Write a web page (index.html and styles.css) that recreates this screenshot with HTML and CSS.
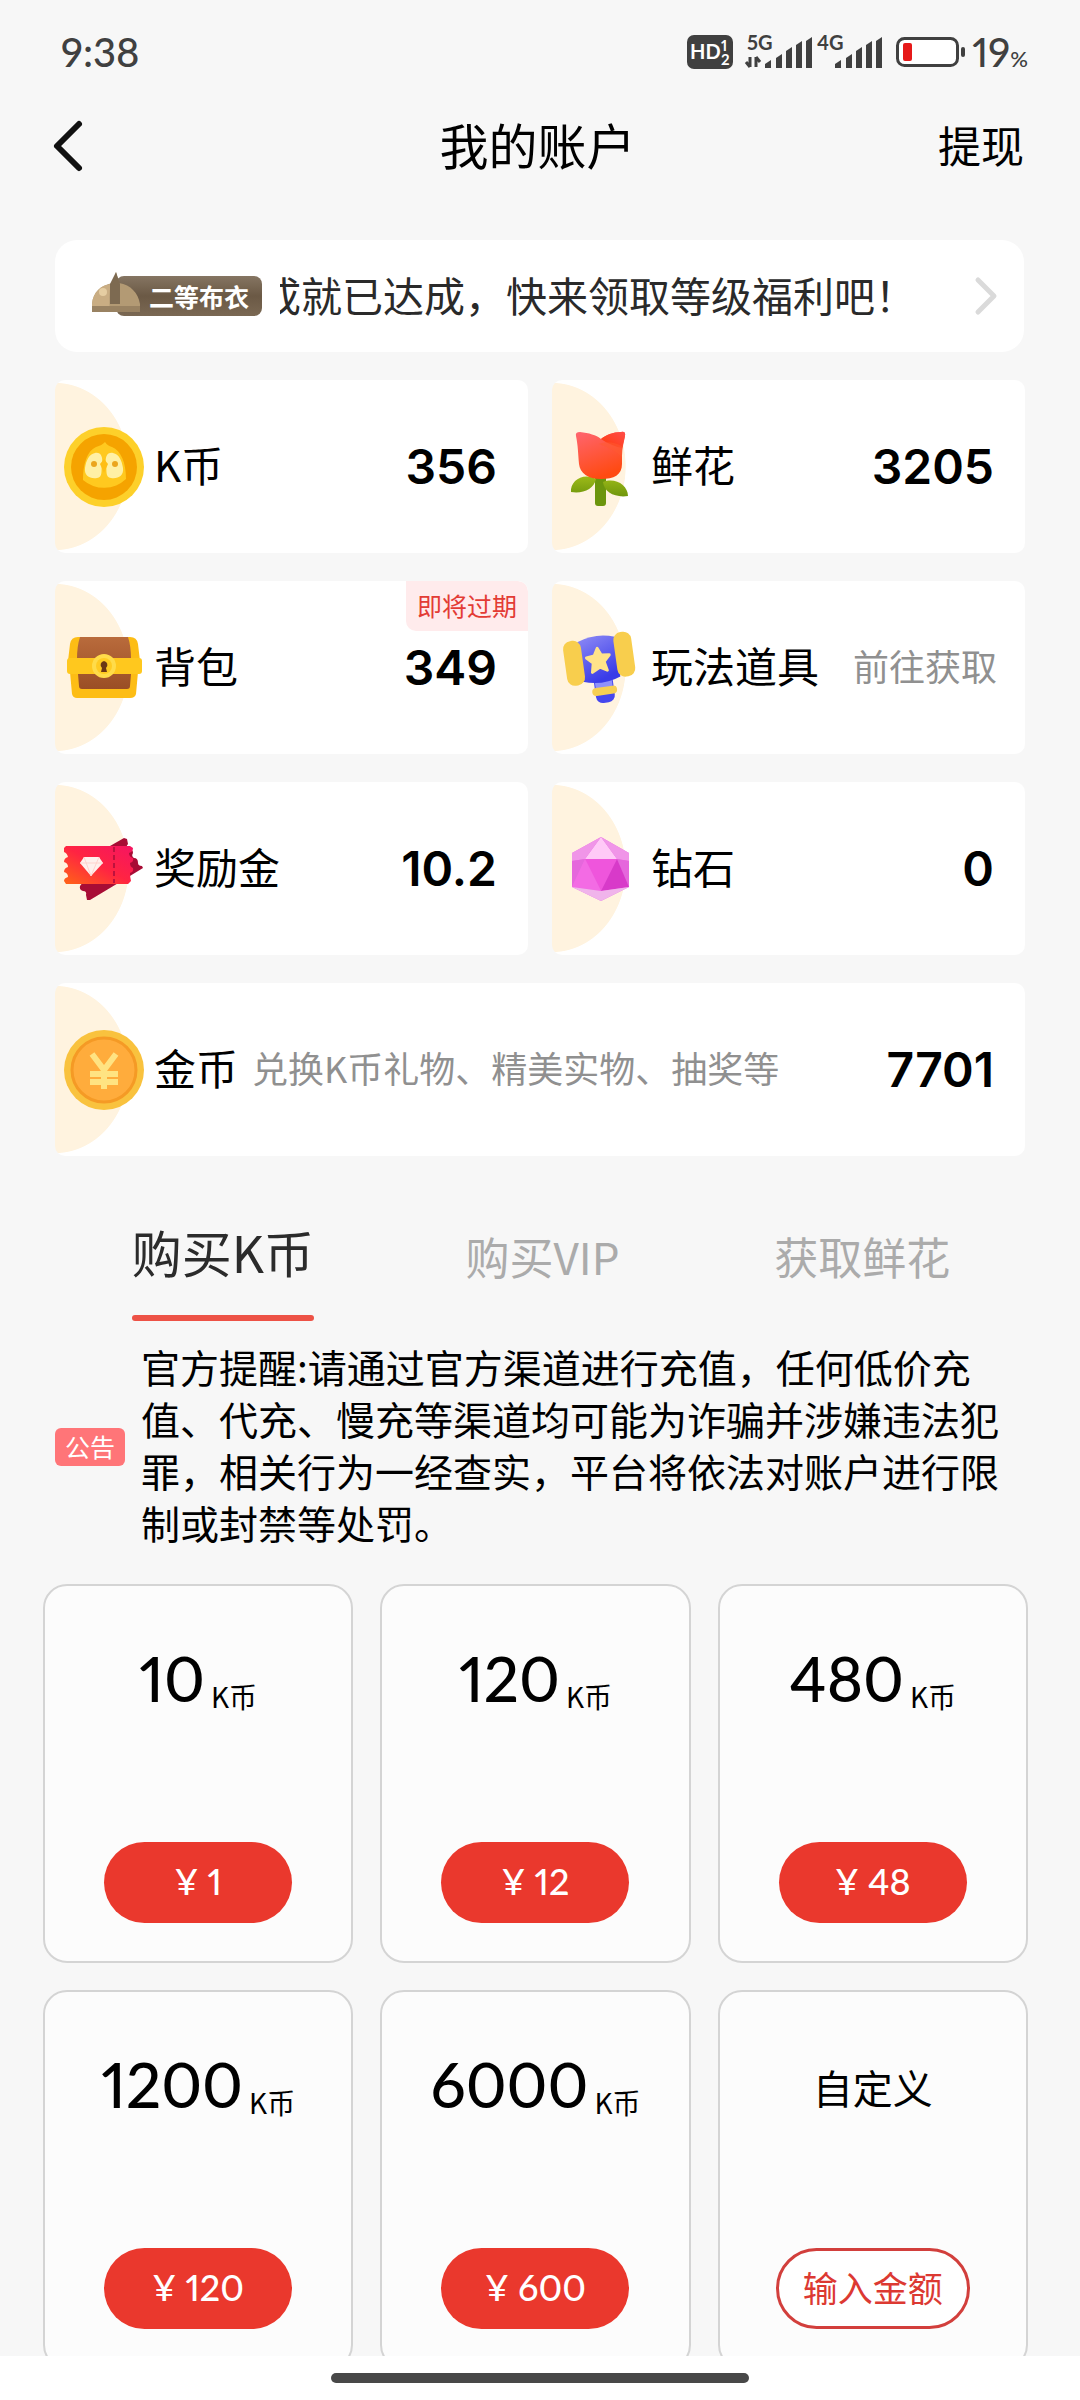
FILE: index.html
```html
<!DOCTYPE html>
<html lang="zh-CN">
<head>
    <meta charset="UTF-8">
    <meta name="viewport" content="width=device-width, initial-scale=1.0">
    <title>我的账户</title>
    <link rel="stylesheet" href="styles.css">
</head>
<body>
    <div class="app">
        <div class="status-bar">
            <span class="status-time">9:38</span>
            <div class="status-icons">
                <svg class="hd-icon" width="46" height="34" viewBox="0 0 46 34">
                    <rect width="46" height="34" rx="7" fill="#404040"/>
                    <text x="3" y="24" font-size="20" font-weight="700" fill="#fff">HD</text>
                    <text x="34" y="16" font-size="15" font-weight="700" fill="#fff">1</text>
                    <text x="34" y="30" font-size="15" font-weight="700" fill="#fff">2</text>
                </svg>
                <svg class="signal-5g" width="67" height="34" viewBox="0 0 67 34">
                    <text x="2" y="15" font-size="20" font-weight="700" fill="#404040">5G</text>
                    <path d="M5 22v10M5 32l-4-5M11 32V22M11 22l4 5" stroke="#404040" stroke-width="3" fill="none"/>
                    <path d="M20 29l6-4v8h-6zM31 23l6-4v14h-6zM41 16l6-4v21h-6zM51 10l6-4v27h-6zM61 6l6-4v31h-6z" fill="#404040"/>
                </svg>
                <svg class="signal-4g" width="65" height="34" viewBox="0 0 65 34">
                    <text x="0" y="15" font-size="20" font-weight="700" fill="#404040">4G</text>
                    <path d="M18 29l6-4v8h-6zM29 23l6-4v14h-6zM39 16l6-4v21h-6zM49 10l6-4v27h-6zM59 6l6-4v31h-6z" fill="#404040"/>
                </svg>
                <svg class="battery-icon" width="70" height="30" viewBox="0 0 70 30">
                    <rect x="1.5" y="1.5" width="60" height="27" rx="7" fill="#fff" stroke="#404040" stroke-width="3"/>
                    <rect x="7" y="6" width="9" height="18" rx="2" fill="#e61919"/>
                    <rect x="65" y="10" width="4" height="10" rx="2" fill="#404040"/>
                </svg>
                <span class="battery-level">19<small>%</small></span>
            </div>
        </div>

        <header class="header">
            <button class="back-button" aria-label="返回">
                <svg width="32" height="52" viewBox="0 0 32 52">
                    <path d="M28 4L6 26l22 22" fill="none" stroke="#111" stroke-width="6" stroke-linecap="round" stroke-linejoin="round"/>
                </svg>
            </button>
            <h1>我的账户</h1>
            <a class="withdraw" href="#">提现</a>
        </header>

        <main class="content">
            <a class="banner" href="#">
                <span class="level-badge">
                    <svg width="50" height="42" viewBox="0 0 50 42">
                        <path d="M0 39V32C1 20 9 13 21 11l3-11 3 11c12 2 19 10 21 21v7z" fill="#b39a74"/>
                        <path d="M0 39V32C1 20 9 13 19 12c-2 8-2 18-1 27z" fill="#c9ad83"/>
                        <path d="M24 0l4 12v20H18V12z" fill="#7d6a51"/>
                        <circle cx="11" cy="20" r="4" fill="#e5cda2"/>
                        <path d="M0 34h48v6H0z" fill="#998262"/>
                    </svg>
                    <span>二等布衣</span>
                </span>
                <span class="banner-text">成就已达成，快来领取等级福利吧！</span>
                <svg width="24" height="40" viewBox="0 0 24 40">
                    <path d="M4 4l16 16L4 36" fill="none" stroke="#dadada" stroke-width="5" stroke-linecap="round" stroke-linejoin="round"/>
                </svg>
            </a>

            <section class="wallet">
                <a class="wallet-card" href="#">
                    <svg class="wallet-icon" viewBox="0 0 80 80">
                        <circle cx="40" cy="40" r="40" fill="#fdd02a"/>
                        <circle cx="40" cy="40" r="33" fill="#f5a300"/>
                        <path d="M41 15c2 3 4 4 7 5 9 4 14 15 14 32a32 32 0 0 1-43 1c0-16 4-29 13-33 4-1 7-3 9-5z" fill="#ffc91f"/>
                        <path d="M31 26c6-1 8 4 7 11s1 13-5 14c-7 1-13-2-12-10 1-7 4-14 10-15zM49 26c-6-1-8 4-7 11s-1 13 5 14c7 1 13-2 12-10-1-7-4-14-10-15z" fill="#fff0a5"/>
                        <circle cx="30" cy="37" r="3" fill="#eba51e"/>
                        <circle cx="51" cy="37" r="3" fill="#eba51e"/>
                        <path d="M40 32l4 5-4 9-4-9z" fill="#ffbe14"/>
                    </svg>
                    <span class="wallet-name">K币</span>
                    <strong class="wallet-value">356</strong>
                </a>
                <a class="wallet-card" href="#">
                    <svg class="wallet-icon" viewBox="0 0 80 80">
                        <defs>
                            <linearGradient id="petal" x1="0" y1="0" x2="0.4" y2="1">
                                <stop offset="0" stop-color="#ff6570"/>
                                <stop offset="1" stop-color="#ff4a12"/>
                            </linearGradient>
                            <linearGradient id="petal-back" x1="1" y1="0" x2="0" y2="1">
                                <stop offset="0" stop-color="#ff4d4a"/>
                                <stop offset="1" stop-color="#ff3a08"/>
                            </linearGradient>
                            <linearGradient id="leaf" x1="0" y1="0" x2="0" y2="1">
                                <stop offset="0" stop-color="#9dba18"/>
                                <stop offset="1" stop-color="#6f960c"/>
                            </linearGradient>
                        </defs>
                        <path d="M34 50h11v26q0 3-3 3h-5q-3 0-3-3z" fill="#6c950d"/>
                        <path d="M10 65c-1-11 12-20 25-13-2 10-13 15-25 13zM67 69c0-11-13-19-25-14 1 10 12 16 25 14z" fill="url(#leaf)"/>
                        <path d="M15 9q-1-4 4-4c9 1 16 3 21 7 5-4 12-7 20-7q5-1 4 4c-1 6-3 12-3 20v8c0 11-8 15-21 15S19 46 18 37c-1-12-1-18-3-28z" fill="url(#petal)"/>
                        <path d="M40 12c5-4 12-7 20-7q5-1 4 4c-1 4-2 8-3 12-5-1-14-4-21-9z" fill="url(#petal-back)"/>
                        <path d="M38 17c7-3 15-2 23 2v11c-7-6-14-10-23-13z" fill="#ff5a30" opacity="0.5"/>
                    </svg>
                    <span class="wallet-name">鲜花</span>
                    <strong class="wallet-value">3205</strong>
                </a>
                <a class="wallet-card" href="#">
                    <svg class="wallet-icon" viewBox="0 0 80 80">
                        <defs>
                            <linearGradient id="wood" x1="0" y1="0" x2="0" y2="1">
                                <stop offset="0" stop-color="#b96b3c"/>
                                <stop offset="1" stop-color="#9a4e25"/>
                            </linearGradient>
                        </defs>
                        <path d="M6 16q1-7 8-7h52q7 0 8 7l2 17H4zM6 44h68l-2 22q-1 4-6 4H13q-4 0-5-4z" fill="#fdbd15"/>
                        <path d="M16 9h48q3 9 3 22H13q0-13 3-22zM14 46h53l-1 12q0 3-3 3H18q-3 0-3-3z" fill="url(#wood)"/>
                        <rect x="3" y="30" width="75" height="16" rx="3" fill="#ffc81e"/>
                        <circle cx="40" cy="38" r="12" fill="#ffdc4a"/>
                        <circle cx="40" cy="38" r="8" fill="#ffcb22"/>
                        <path d="M40 33a4 4 0 0 1 2 7l1 4h-6l1-4a4 4 0 0 1 2-7z" fill="#6b3715"/>
                    </svg>
                    <span class="wallet-name">背包</span>
                    <strong class="wallet-value">349</strong>
                    <span class="expire-tag">即将过期</span>
                </a>
                <a class="wallet-card" href="#">
                    <svg class="wallet-icon" viewBox="0 0 80 80">
                        <defs>
                            <linearGradient id="hammer" x1="0" y1="0" x2="0.3" y2="1">
                                <stop offset="0" stop-color="#8b88f5"/>
                                <stop offset="1" stop-color="#3a3ce8"/>
                            </linearGradient>
                        </defs>
                        <g transform="translate(0 -3) rotate(-8 40 36)">
                            <rect x="30" y="50" width="19" height="28" rx="7" fill="#4547ee"/>
                            <rect x="31" y="48" width="17" height="15" fill="#8f91fa"/>
                            <rect x="27" y="62" width="25" height="8" rx="4" fill="#f6cf52"/>
                            <path d="M19 14q20-7 38 0v40q-18 7-38 0z" fill="url(#hammer)"/>
                            <rect x="4" y="12" width="18" height="45" rx="8" fill="#f8ce4d"/>
                            <rect x="55" y="10" width="18" height="45" rx="8" fill="#f8ce4d"/>
                            <path d="M38 23l3 7 8 1-6 6 2 9-7-4-8 4 2-9-6-6 8-1z" fill="#ffe38a" stroke="#ffe38a" stroke-width="3" stroke-linejoin="round"/>
                        </g>
                    </svg>
                    <span class="wallet-name">玩法道具</span>
                    <span class="wallet-hint wallet-link">前往获取</span>
                </a>
                <a class="wallet-card" href="#">
                    <svg class="wallet-icon" viewBox="0 0 80 80">
                        <defs>
                            <linearGradient id="ticket" x1="0" y1="1" x2="1" y2="0">
                                <stop offset="0" stop-color="#ff6417"/>
                                <stop offset="0.5" stop-color="#ff2442"/>
                                <stop offset="1" stop-color="#f51462"/>
                            </linearGradient>
                        </defs>
                        <path d="M46 17l14-8 3 1 1 5q-3 3 1 5 4 0 4 4-2 3 1 5 4 0 4 5 0 3 4 3l1 2-18 11-35 21-3 0-1-5q1-4-3-4-4-1-3-5z" fill="#a80c35"/>
                        <path d="M0 19l2-2h64l3 2q0 4-4 5 0 4 4 5 1 4-3 5 0 4 3 5 1 4-3 5 0 4 1 8l-3 3H2l-2-3q0-3 4-4 0-4-4-5 0-4 4-5 0-4-4-5 0-4 4-5-1-4-4-5z" fill="url(#ticket)"/>
                        <path d="M50 18v36" stroke="#bd123e" stroke-width="2" stroke-dasharray="5 3"/>
                        <path d="M20 28h15l4 6-12 13-11-13z" fill="#fff0ed"/>
                        <path d="M16 34h23M20 28l7 19 8-19" fill="none" stroke="#ffd3ce"/>
                    </svg>
                    <span class="wallet-name">奖励金</span>
                    <strong class="wallet-value">10.2</strong>
                </a>
                <a class="wallet-card" href="#">
                    <svg class="wallet-icon" viewBox="0 0 80 80">
                        <path d="M40 8l28 16v34L40 72 11 58V24z" fill="#e96ee0"/>
                        <path d="M40 8L24 30h32z" fill="#ffc9f7"/>
                        <path d="M40 8L11 24v8l13-2zM40 8l28 16v8l-12-2z" fill="#f095e8"/>
                        <path d="M24 30h32L40 62z" fill="#ef55dc"/>
                        <path d="M24 30l-13 2v26zM56 30l12 2v26z" fill="#e567dc"/>
                        <path d="M24 30L11 58l29 4z" fill="#f36be4"/>
                        <path d="M56 30L40 62l28-4z" fill="#d83ac9"/>
                        <path d="M11 58l29 4 28-4-28 14z" fill="#f0b4eb"/>
                    </svg>
                    <span class="wallet-name">钻石</span>
                    <strong class="wallet-value">0</strong>
                </a>
                <a class="wallet-card wallet-wide" href="#">
                    <svg class="wallet-icon" viewBox="0 0 80 80">
                        <circle cx="40" cy="40" r="40" fill="#f9c23e"/>
                        <circle cx="40" cy="40" r="32" fill="#ffac3c" stroke="#f59a25" stroke-width="3"/>
                        <path d="M28 24l12 16 12-16M26 44h28M26 52h28M40 40v19" fill="none" stroke="#ffe382" stroke-width="6"/>
                    </svg>
                    <span class="wallet-name">金币</span>
                    <span class="wallet-hint">兑换K币礼物、精美实物、抽奖等</span>
                    <strong class="wallet-value">7701</strong>
                </a>
            </section>

            <nav class="tabs">
                <a class="tab active" href="#">购买K币</a>
                <a class="tab" href="#">购买VIP</a>
                <a class="tab" href="#">获取鲜花</a>
            </nav>

            <div class="notice">
                <span class="notice-tag">公告</span>
                <p>官方提醒:请通过官方渠道进行充值，任何低价充值、代充、慢充等渠道均可能为诈骗并涉嫌违法犯罪，相关行为一经查实，平台将依法对账户进行限制或封禁等处罚。</p>
            </div>

            <section class="packages">
                <div class="package">
                    <p class="amount">10<small>K币</small></p>
                    <button class="price">¥ 1</button>
                </div>
                <div class="package">
                    <p class="amount">120<small>K币</small></p>
                    <button class="price">¥ 12</button>
                </div>
                <div class="package">
                    <p class="amount">480<small>K币</small></p>
                    <button class="price">¥ 48</button>
                </div>
                <div class="package">
                    <p class="amount">1200<small>K币</small></p>
                    <button class="price">¥ 120</button>
                </div>
                <div class="package">
                    <p class="amount">6000<small>K币</small></p>
                    <button class="price">¥ 600</button>
                </div>
                <div class="package">
                    <p class="amount custom">自定义</p>
                    <button class="price price-outline">输入金额</button>
                </div>
            </section>
        </main>

        <div class="home-bar"><span></span></div>
    </div>
</body>
</html>
```
FILE: styles.css
```css
* {
    box-sizing: border-box;
}

body {
    margin: 0;
    background: #f7f7f7;
    color: #000;
    font-family: 'Noto Sans CJK SC', sans-serif;
}

h1,
p {
    margin: 0;
    font-weight: 400;
}

a {
    color: inherit;
    text-decoration: none;
}

button {
    padding: 0;
    border: none;
    background: none;
    font-family: inherit;
    cursor: pointer;
}

svg {
    display: block;
    flex: none;
    overflow: visible;
}

.app {
    display: flex;
    flex-direction: column;
    height: 100vh;
    overflow: hidden;
}

/* status bar */
.status-bar {
    display: flex;
    flex: none;
    justify-content: space-between;
    align-items: center;
    height: 104px;
    padding: 0 52px 0 61px;
    color: #404040;
    font-family: Lato, sans-serif;
    font-size: 40px;
    font-weight: 500;
    font-variant-numeric: proportional-nums;
}

.status-icons {
    display: flex;
    align-items: center;
}

.status-icons text {
    font-family: Lato, sans-serif;
}

.signal-5g {
    margin-left: 12px;
}

.signal-4g {
    margin-left: 5px;
}

.battery-icon {
    margin: 0 6px 0 14px;
}

.battery-level small {
    font-size: 22px;
}

/* header */
.header {
    display: grid;
    flex: none;
    grid-template-columns: 1fr auto 1fr;
    align-items: center;
    height: 84px;
    padding: 0 56px 0 51px;
}

.header h1 {
    padding-bottom: 5px;
    font-size: 49px;
    line-height: 72px;
}

.back-button {
    justify-self: start;
}

.withdraw {
    justify-self: end;
    padding-bottom: 5px;
    font-size: 43px;
    line-height: 64px;
}

.content {
    flex: 1;
    min-height: 0;
    padding: 52px 52px 0 43px;
    overflow: hidden;
}

/* banner */
.banner {
    display: flex;
    align-items: center;
    height: 112px;
    margin: 0 4px 0 12px;
    padding: 0 26px 0 37px;
    border-radius: 22px;
    background: #fff;
    color: #2a2a2a;
}

.level-badge {
    position: relative;
    width: 170px;
    padding-left: 24px;
}

.level-badge svg {
    position: absolute;
    left: 0;
    bottom: 2px;
}

.level-badge span {
    display: block;
    padding-left: 33px;
    border-radius: 8px;
    background: linear-gradient(#857562, #6b5945 50%, #7a6853);
    color: #fff;
    font-size: 25px;
    font-weight: 700;
    line-height: 40px;
}

.banner-text {
    flex: 1;
    margin: 0 20px 0 18px;
    padding-bottom: 5px;
    overflow: hidden;
    font-size: 41px;
    line-height: 60px;
    text-indent: -20px;
    white-space: nowrap;
}

/* wallet */
.wallet {
    display: grid;
    grid-template-columns: 1fr 1fr;
    gap: 28px 24px;
    margin: 28px 3px 0 12px;
}

.wallet-card {
    position: relative;
    display: flex;
    align-items: center;
    height: 173px;
    padding: 0 31px 0 9px;
    border-radius: 10px;
    background: radial-gradient(74px 84px at 0 50%, #fff3df 99%, #fff 100%);
    overflow: hidden;
}

.wallet-wide {
    grid-column: 1 / -1;
}

.wallet-icon {
    width: 80px;
    height: 80px;
}

.wallet-name {
    margin-left: 10px;
    padding-bottom: 5px;
    font-size: 42px;
    line-height: 62px;
}

.wallet-value {
    margin-left: auto;
    font-family: Inter, sans-serif;
    font-size: 48px;
    font-weight: 600;
}

.wallet-hint {
    margin-left: 14px;
    padding-bottom: 5px;
    color: #909090;
    font-size: 36px;
}

.wallet-link {
    margin-left: auto;
    margin-right: -3px;
}

.expire-tag {
    position: absolute;
    top: 0;
    right: 0;
    padding: 0 11px 2px;
    border-radius: 0 10px 0 10px;
    background: #ffebec;
    color: #e33c35;
    font-size: 25px;
    line-height: 48px;
}

/* tabs */
.tabs {
    display: grid;
    grid-template-columns: repeat(3, 1fr);
    align-items: center;
    justify-items: center;
    margin-top: 45px;
    padding: 0 6px 0 20px;
}

.tab {
    padding-bottom: 10px;
    color: #ababab;
    font-size: 44px;
    line-height: 104px;
}

.tab.active {
    padding: 0;
    color: #2b2b2b;
    font-size: 50px;
    line-height: 100px;
}

.tab.active::after {
    content: '';
    display: block;
    height: 6px;
    margin-top: 14px;
    border-radius: 3px;
    background: #ed5246;
}

/* notice */
.notice {
    display: flex;
    align-items: center;
    margin-top: 19px;
    padding: 0 12px;
}

.notice-tag {
    flex: none;
    width: 70px;
    margin-right: 16px;
    padding-bottom: 2px;
    border-radius: 6px;
    background: #ff7578;
    color: #fff;
    font-size: 25px;
    line-height: 36px;
    text-align: center;
}

.notice p {
    padding: 0 12px 6px 0;
    font-size: 39px;
    line-height: 52px;
}

/* packages */
.packages {
    display: grid;
    grid-template-columns: repeat(3, 1fr);
    gap: 27px;
    margin-top: 30px;
}

.package {
    display: flex;
    flex-direction: column;
    justify-content: space-between;
    align-items: center;
    height: 379px;
    padding: 54px 0 38px;
    border: 2px solid #d4d4d4;
    border-radius: 24px;
    background: #fcfcfc;
}

.amount {
    display: flex;
    align-items: flex-end;
    gap: 6px;
    font-family: Lato, sans-serif;
    font-size: 62px;
    font-weight: 500;
    font-variant-numeric: proportional-nums;
    line-height: 76px;
}

.amount small {
    font-family: 'Noto Sans CJK SC', sans-serif;
    font-size: 28px;
    font-weight: 400;
    line-height: 40px;
}

.custom {
    padding-top: 3px;
    font-family: 'Noto Sans CJK SC', sans-serif;
    font-size: 40px;
    font-weight: 400;
}

.price {
    width: 188px;
    height: 81px;
    padding-bottom: 3px;
    border-radius: 41px;
    background: #ea382d;
    color: #fff;
    font-family: Lato, sans-serif;
    font-size: 36px;
    font-weight: 500;
    font-variant-numeric: proportional-nums;
}

.price-outline {
    width: 194px;
    padding-bottom: 5px;
    border: 3px solid #d23f3c;
    background: #fff;
    color: #dc3932;
    font-family: 'Noto Sans CJK SC', sans-serif;
    font-size: 35px;
    font-weight: 400;
}

/* system home indicator */
.home-bar {
    display: flex;
    flex: none;
    justify-content: center;
    align-items: center;
    height: 44px;
    background: #fff;
}

.home-bar span {
    width: 418px;
    height: 10px;
    border-radius: 5px;
    background: #484848;
}
```
